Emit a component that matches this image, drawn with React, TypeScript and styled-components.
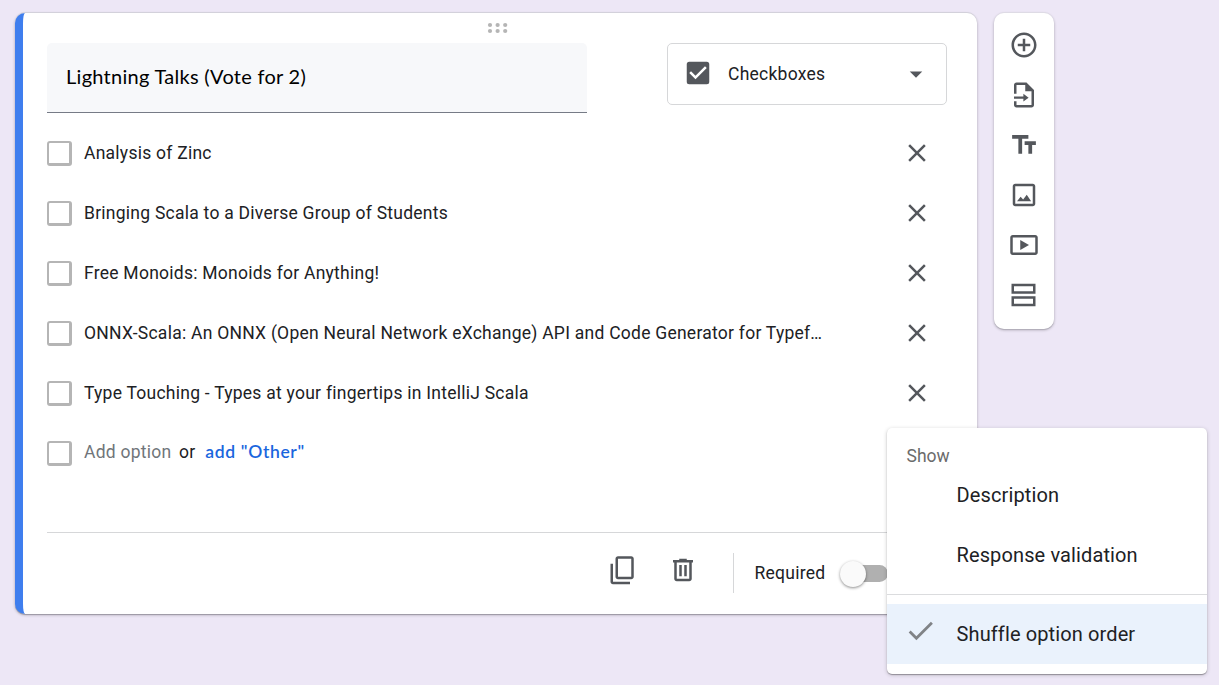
import React from "react";
import styled, { createGlobalStyle } from "styled-components";
import { MdAddCircleOutline, MdArrowDropDown, MdCheck, MdCheckBox, MdClose, MdTextFields } from "react-icons/md";

const GlobalStyle = createGlobalStyle`
  * { box-sizing: border-box; }
  body {
    margin: 0;
    background: #ede7f6;
    color: #202124;
    font-family: Roboto, "Liberation Sans", sans-serif;
    font-size: 17.5px;
    overflow: hidden;
  }
  svg { display: block; flex: none; }
`;

const Page = styled.main`
  position: relative;
  display: flex;
  align-items: flex-start;
  gap: 17px;
  height: 685px;
  padding: 13px 0 0 15px;
`;

const Card = styled.section`
  display: flex;
  flex-direction: column;
  width: 962px;
  height: 600.5px;
  padding-left: 24px;
  background: #fff;
  border-left: 8px solid #3f7eee;
  border-radius: 10px;
  box-shadow: 0 -1px 0 #d3d1db, 0 1px 0 #a09ca8, 0 1px 3px rgba(0, 0, 0, 0.3);
`;

const DragHandle = styled.div`
  height: 30px;
  padding: 9px 0 0 440px;
`;

const Header = styled.header`
  display: flex;
  justify-content: space-between;
  align-items: flex-start;
  height: 80px;
  padding-right: 30px;
`;

const Title = styled.div`
  width: 540px;
  height: 70px;
  padding-left: 19px;
  line-height: 67px;
  background: #f7f8fa;
  border-bottom: 1px solid #767b86;
  border-radius: 5px 5px 0 0;
  color: #000;
  font-family: Lato, "Liberation Sans", sans-serif;
  font-size: 20px;
  letter-spacing: 0.28px;
`;

const TypeSelect = styled.div`
  display: flex;
  align-items: center;
  width: 280px;
  height: 62px;
  padding: 0 15px;
  border: 1px solid #d6d7d9;
  border-radius: 5px;
  color: #54575c;
`;

const TypeIcon = styled.span`
  padding-bottom: 2px;
`;

const TypeLabel = styled.span`
  flex: 1;
  padding-left: 15px;
  color: #202124;
  letter-spacing: 0.25px;
`;

const OptionRow = styled.div`
  display: flex;
  align-items: center;
  height: 60px;
  padding-right: 45px;
  color: #54575c;
`;

const Box = styled.span`
  flex: none;
  width: 25px;
  height: 25px;
  margin-right: 12px;
  border: solid #b5b5b5;
  border-width: 2px 3px 3px 2px;
  border-radius: 3px;
`;

const OptionText = styled.span<{ $muted?: boolean }>`
  color: ${(p) => (p.$muted ? "#70757a" : "#202124")};
  letter-spacing: 0.25px;
  white-space: nowrap;
`;

const AddLine = styled.div`
  display: flex;
  align-items: baseline;
  padding-bottom: 4px;
`;

const Spacer = styled.span`
  flex: 1;
`;

const AddOther = styled.a`
  margin-left: 10px;
  color: #1a66de;
  font-family: Lato, "Liberation Sans", sans-serif;
  font-weight: 600;
  letter-spacing: 0.65px;
`;

const OrText = styled(OptionText)`
  margin-left: 7.5px;
`;

const Footer = styled.footer`
  display: flex;
  align-items: center;
  height: 81px;
  margin-top: 49px;
  border-top: 1px solid #d6d7d9;
  padding-left: 561px;
  color: #54575c;
`;

const FooterIcons = styled.div`
  display: flex;
  gap: 30px;
  padding-bottom: 6px;
`;

const Required = styled.div`
  display: flex;
  align-items: center;
  height: 40px;
  margin-left: 35px;
  padding-left: 20.5px;
  border-left: 1px solid #d6d7d9;
  color: #202124;
  letter-spacing: 0.25px;
`;

const Switch = styled.span`
  display: flex;
  align-items: center;
  width: 45px;
  height: 17px;
  margin: 1px 0 0 17.5px;
  border-radius: 9px;
  background: #b0b0b0;
`;

const Thumb = styled.span`
  width: 26px;
  height: 26px;
  margin-left: -3px;
  flex: none;
  border-radius: 50%;
  background: #fafafa;
  box-shadow: 0 1px 3px rgba(0, 0, 0, 0.45);
`;

const ToolBar = styled.nav`
  display: flex;
  flex-direction: column;
  align-items: center;
  width: 60px;
  height: 315.5px;
  padding-top: 7px;
  background: #fff;
  border-radius: 10px;
  box-shadow: 0 -1px 0 #dedbe5, 0 1px 0 #b3afbb, 0 1px 3px rgba(0, 0, 0, 0.3);
  color: #54575c;
`;

const ToolButton = styled.div`
  display: flex;
  align-items: center;
  justify-content: center;
  width: 50px;
  height: 50px;
`;

const Menu = styled.div`
  position: absolute;
  left: 887px;
  top: 428px;
  width: 320px;
  height: 246px;
  background: #fff;
  border-radius: 5px;
  box-shadow: 0 1px 1px rgba(0, 0, 0, 0.3), 0 1px 4px rgba(0, 0, 0, 0.2);
`;

const MenuHeading = styled.div`
  height: 37px;
  padding: 17px 0 0 19.5px;
  line-height: 22px;
  color: #6b6b6b;
`;

const MenuItem = styled.div<{ $active?: boolean }>`
  display: flex;
  align-items: center;
  height: 60px;
  font-size: 20px;
  letter-spacing: 0.12px;
  background: ${(p) => (p.$active ? "#eaf2fc" : "transparent")};
`;

const MenuMark = styled.span`
  width: 69.5px;
  padding: 0 0 7px 17px;
  color: #808386;
`;

const MenuDivider = styled.div`
  height: 1px;
  margin: 9px 0;
  background: #dbdcde;
`;

const Icon = ({ children }: { children: React.ReactNode }) => (
  <svg width="30" height="30" viewBox="0 0 24 24" fill="currentColor">
    {children}
  </svg>
);

const ImportIcon = () => (
  <Icon>
    <path d="M14 2H6c-1.1 0-2 .9-2 2v7h2V4h7v5h5v11H6v-3H4v3c0 1.1.9 2 2 2h12c1.1 0 2-.9 2-2V8z" />
    <path d="M4 13.2h7.5V11l4.2 3.1-4.2 3.1V15H4z" />
  </Icon>
);

const ImageIcon = () => (
  <Icon>
    <path d="M19 5v14H5V5h14m0-2H5c-1.1 0-2 .9-2 2v14c0 1.1.9 2 2 2h14c1.1 0 2-.9 2-2V5c0-1.1-.9-2-2-2z" />
    <path d="M6.4 17l2.9-3.7 2 2.2 2.9-3.8 3.5 5.3z" />
  </Icon>
);

const VideoIcon = () => (
  <Icon>
    <path d="M21 4H3c-1.1 0-2 .9-2 2v12c0 1.1.9 2 2 2h18c1.1 0 2-.9 2-2V6c0-1.1-.9-2-2-2zm0 14H3V6h18z" />
    <path d="M9 8v8l7-4z" />
  </Icon>
);

const SectionIcon = () => (
  <Icon>
    <path d="M2 3h19.2v8H2zm2 2v4h15.2V5zM2 13h19.2v8H2zm2 2v4h15.2v-4z" fillRule="evenodd" />
  </Icon>
);

const CopyIcon = () => (
  <Icon>
    <path d="M18.6 1H8c-1.1 0-2 .9-2 2v14.4c0 1.1.9 2 2 2h10.6c1.1 0 2-.9 2-2V3c0-1.1-.9-2-2-2zm0 16.4H8V3h10.6z" />
    <path d="M4 7H2v14.4c0 1.1.9 2 2 2h13.6v-2H4z" />
  </Icon>
);

const TrashIcon = () => (
  <Icon>
    <path d="M15 4V3H9v1H4v2h1v13c0 1.1.9 2 2 2h10c1.1 0 2-.9 2-2V6h1V4zm2 15H7V6h10z" />
    <path d="M9 8h2v9H9zM13 8h2v9h-2z" />
  </Icon>
);

const options = [
  "Analysis of Zinc",
  "Bringing Scala to a Diverse Group of Students",
  "Free Monoids: Monoids for Anything!",
  "ONNX-Scala: An ONNX (Open Neural Network eXchange) API and Code Generator for Typef…",
  "Type Touching - Types at your fingertips in IntelliJ Scala",
];

const tools = [
  <MdAddCircleOutline size={30} />,
  <ImportIcon />,
  <MdTextFields size={30} />,
  <ImageIcon />,
  <VideoIcon />,
  <SectionIcon />,
];

export default function App() {
  return (
    <Page>
      <GlobalStyle />
      <Card>
        <DragHandle>
          <svg width="22" height="12" viewBox="0 0 22 12" fill="#b5b5b5">
            {[3, 10.6, 18.2].map((x) => (
              <React.Fragment key={x}>
                <circle cx={x} cy="3" r="2.1" />
                <circle cx={x} cy="9" r="2.1" />
              </React.Fragment>
            ))}
          </svg>
        </DragHandle>
        <Header>
          <Title>Lightning Talks (Vote for 2)</Title>
          <TypeSelect>
            <TypeIcon>
              <MdCheckBox size={30} />
            </TypeIcon>
            <TypeLabel>Checkboxes</TypeLabel>
            <MdArrowDropDown size={30} />
          </TypeSelect>
        </Header>
        {options.map((option) => (
          <OptionRow key={option}>
            <Box />
            <OptionText>{option}</OptionText>
            <Spacer />
            <MdClose size={30} />
          </OptionRow>
        ))}
        <OptionRow>
          <Box />
          <AddLine>
            <OptionText $muted>Add option</OptionText>
            <OrText>or</OrText>
            <AddOther>add "Other"</AddOther>
          </AddLine>
        </OptionRow>
        <Footer>
          <FooterIcons>
            <CopyIcon />
            <TrashIcon />
          </FooterIcons>
          <Required>
            Required
            <Switch>
              <Thumb />
            </Switch>
          </Required>
        </Footer>
      </Card>
      <ToolBar>
        {tools.map((tool, i) => (
          <ToolButton key={i}>{tool}</ToolButton>
        ))}
      </ToolBar>
      <Menu>
        <MenuHeading>Show</MenuHeading>
        <MenuItem>
          <MenuMark />
          Description
        </MenuItem>
        <MenuItem>
          <MenuMark />
          Response validation
        </MenuItem>
        <MenuDivider />
        <MenuItem $active>
          <MenuMark>
            <MdCheck size={33} />
          </MenuMark>
          Shuffle option order
        </MenuItem>
      </Menu>
    </Page>
  );
}
